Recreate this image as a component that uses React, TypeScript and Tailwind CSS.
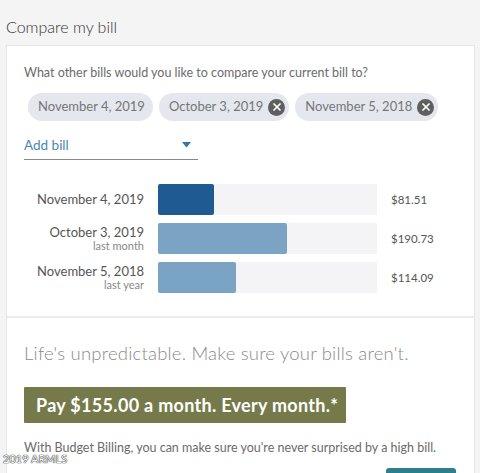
import { X } from "lucide-react";

const chips = [
  { label: "November 4, 2019", removable: false },
  { label: "October 3, 2019", removable: true },
  { label: "November 5, 2018", removable: true },
];

const bars = [
  { date: "November 4, 2019", sub: "", pct: 25.5, color: "bg-[#1f5b92]", amount: "$81.51" },
  { date: "October 3, 2019", sub: "last month", pct: 59, color: "bg-[#7ba3c4]", amount: "$190.73" },
  { date: "November 5, 2018", sub: "last year", pct: 35.5, color: "bg-[#7ba3c4]", amount: "$114.09" },
];

export default function App() {
  return (
    <div className="relative h-[473px] w-[480px] overflow-hidden bg-[#f4f4f4] font-['Lato',sans-serif]">
      <h1 className="pl-[6px] pt-[16px] text-[16px] leading-[21px] font-light text-[#333]">
        Compare my bill
      </h1>

      <div className="mt-[8px] ml-[6px] w-[469px] border border-[#e6e6e6] bg-white">
        <div className="px-[17px] pt-[18px] pb-[23px]">
          <p className="text-[12.5px] leading-[18px] text-[#6b6b6b]">
            What other bills would you like to compare your current bill to?
          </p>

          <div className="mt-[11px] flex gap-[6px] pl-[4px]">
            {chips.map((c) => (
              <div
                key={c.label}
                className="flex h-[28px] items-center gap-[5px] rounded-full bg-[#e4e7ee] pr-[4px] pl-[10px] text-[13px] text-[#767676]"
              >
                <span className={c.removable ? "" : "pr-[4px]"}>{c.label}</span>
                {c.removable && (
                  <span className="flex h-[17px] w-[17px] items-center justify-center rounded-full bg-[#5f5f5f]">
                    <X size={12} strokeWidth={3.5} color="#fff" />
                  </span>
                )}
              </div>
            ))}
          </div>

          <div className="mt-[14px] flex w-[174px] items-center justify-between border-b border-[#888] pb-[4px]">
            <span className="text-[13.5px] leading-[20px] text-[#4a86b0]">Add bill</span>
            <svg width="9" height="6" viewBox="0 0 9 6" className="mr-[7px]">
              <path d="M0 0 L9 0 L4.5 5.5 Z" fill="#2f76ad" />
            </svg>
          </div>

          <div className="mt-[24px] flex flex-col gap-[8px]">
            {bars.map((b) => (
              <div key={b.date} className="flex items-center">
                <div className="w-[120px] text-right leading-none text-[#555]">
                  <div className="text-[13px]">{b.date}</div>
                  {b.sub && <div className="mt-[1px] text-[11px] text-[#888]">{b.sub}</div>}
                </div>
                <div className="ml-[14px] h-[31px] w-[219px] bg-[#f4f4f6]">
                  <div
                    className={`h-full rounded-[2px] ${b.color}`}
                    style={{ width: `${b.pct}%` }}
                  />
                </div>
                <div className="ml-[14px] text-[11.5px] text-[#555]">{b.amount}</div>
              </div>
            ))}
          </div>
        </div>

        <div className="h-[2px] bg-[#ececec]" />

        <div className="px-[17px] pt-[22px] pb-[20px]">
          <p className="text-[18.5px] leading-[26px] font-light tracking-[0.2px] text-[#8a8a8a]">
            Life's unpredictable. Make sure your bills aren't.
          </p>
          <div className="mt-[21px] flex h-[36px] w-[322px] items-center rounded-[1px] bg-[#767a4a] pl-[12px] text-[18px] font-bold tracking-[0.3px] text-white">
            Pay $155.00 a month. Every month.*
          </div>
          <p className="mt-[16px] text-[12.5px] leading-[18px] text-[#6b6b6b]">
            With Budget Billing, you can make sure you're never surprised by a high bill.
          </p>
          <div className="mt-[11px] ml-auto mr-[1px] h-[20px] w-[70px] rounded-t-[3px] bg-[#2e7f8c]" />
        </div>
      </div>

      <div className="absolute top-[451px] left-[3px] text-[11px] text-white [text-shadow:0_0_1px_#000,0_0_1px_#000]">
        2019 ARMLS
      </div>
    </div>
  );
}
